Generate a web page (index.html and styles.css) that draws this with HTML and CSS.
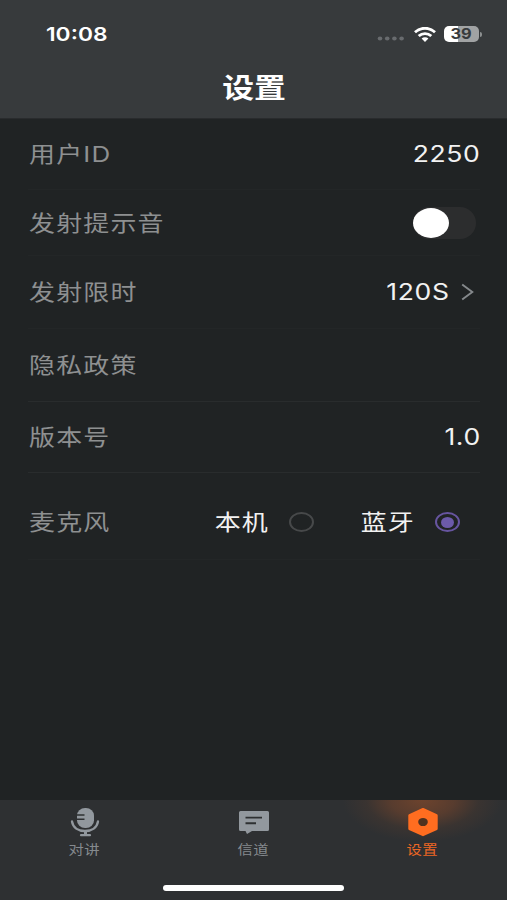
FILE: index.html
```html
<!DOCTYPE html>
<html lang="zh-CN">
<head>
<meta charset="utf-8">
<meta name="viewport" content="width=device-width">
<title>设置</title>
<link rel="stylesheet" href="styles.css">
</head>
<body>
<div class="app">
  <header class="header">
    <div class="status">
      <span class="time wide from-left">10:08</span>
      <div class="status-icons">
        <svg class="dots" width="28" height="5" viewBox="0 0 28 5"><g fill="#686b6e"><ellipse cx="3" cy="2.5" rx="2.3" ry="1.9"/><ellipse cx="10.2" cy="2.5" rx="2.3" ry="1.9"/><ellipse cx="17.4" cy="2.5" rx="2.3" ry="1.9"/><ellipse cx="24.6" cy="2.5" rx="2.3" ry="1.9"/></g></svg>
        <svg class="wifi" width="22" height="15" viewBox="0 0 22 15"><g fill="none" stroke="#fff" stroke-width="2.8"><path d="M1 5.200C6.600-.1 15.400-.1 21 5.200"/><path d="M4.700 9.100C8.300 5.700 13.700 5.700 17.300 9.100"/></g><path d="M7.600 11.600C9.500 9.900 12.500 9.900 14.400 11.600L11 14.900Z" fill="#fff"/></svg>
        <div class="battery"><span class="battery-num">39</span></div>
        <span class="battery-cap"></span>
      </div>
    </div>
    <h1 class="title wide">设置</h1>
  </header>

  <main class="list">
    <section class="row row-id"><span class="label wide from-left">用户ID</span><span class="value wide from-right">2250</span></section>
    <section class="row row-tone"><span class="label wide from-left">发射提示音</span><span class="switch"><span class="knob"></span></span></section>
    <section class="row row-limit"><span class="label wide from-left">发射限时</span><span class="more"><span class="value wide from-right">120S</span><svg width="13" height="18" viewBox="0 0 13 18"><path d="M1.200 1.500L11.300 9L1.200 16.500" fill="none" stroke="#85898c" stroke-width="1.900"/></svg></span></section>
    <section class="row row-privacy"><span class="label wide from-left">隐私政策</span></section>
    <section class="row row-version"><span class="label wide from-left">版本号</span><span class="value wide from-right">1.0</span></section>
    <section class="row row-mic"><span class="label wide from-left">麦克风</span>
      <div class="choices">
        <span class="option wide from-right">本机</span><span class="radio"></span>
        <span class="option second wide from-right">蓝牙</span><span class="radio on"></span>
      </div>
    </section>
  </main>

  <footer class="footer">
    <nav class="tabs">
      <div class="tab">
        <svg width="30" height="30" viewBox="0 0 30 30"><rect x="7" y="1" width="17" height="20" rx="8" ry="7.500" fill="#92989e"/><path d="M6 8H14.500M6 12.300H14.500" stroke="#2e3032" stroke-width="1.400"/><path d="M2 14.500C3 20.500 8 24 15 24S27 20.500 28 14.500" fill="none" stroke="#92989e" stroke-width="2.300" stroke-linecap="round"/><path d="M15.500 24V28" fill="none" stroke="#92989e" stroke-width="3"/><path d="M11 28.200H20" fill="none" stroke="#92989e" stroke-width="2.200" stroke-linecap="round"/></svg>
        <span class="tab-name wide">对讲</span>
      </div>
      <div class="tab">
        <svg width="30" height="30" viewBox="0 0 30 30"><path d="M1.500 4H28.500Q30 4 30 5.500V22.500Q30 24 28.500 24H13L8 27L6.500 24H1.500Q0 24 0 22.500V5.500Q0 4 1.500 4Z" fill="#92989e"/><path d="M6.500 10.600H23M6.500 16.300H17" stroke="#2e3032" stroke-width="1.900"/></svg>
        <span class="tab-name wide">信道</span>
      </div>
      <div class="tab active">
        <svg width="30" height="30" viewBox="0 0 30 30"><path d="M15 2.200L28.500 8.400V21.800L15 28L1.500 21.800V8.400Z" fill="#ff6d20" stroke="#ff6d20" stroke-width="2.400" stroke-linejoin="round"/><ellipse cx="15" cy="15" rx="4.800" ry="4.100" fill="#50321f"/></svg>
        <span class="tab-name wide">设置</span>
      </div>
    </nav>
    <div class="home"></div>
  </footer>
</div>
</body>
</html>
```

FILE: styles.css
```css
* { box-sizing: border-box; }

body {
  margin: 0;
  background: #202324;
  color: #f2f2f2;
  font-family: Inter, "Noto Sans CJK SC", sans-serif;
}

.app {
  width: 507px;
  height: 900px;
  display: flex;
  flex-direction: column;
  overflow: hidden;
}

/* The interface uses wide letterforms throughout. */
.wide { display: inline-block; transform: scaleX(1.18); white-space: nowrap; }
.from-left { transform-origin: left center; }
.from-right { transform-origin: right center; }

.header {
  height: 119px;
  background: #373a3c;
  border-bottom: 1px solid #292b2d;
  display: flex;
  flex-direction: column;
  align-items: center;
}
.status {
  width: 100%;
  height: 68px;
  padding: 0 25px 0 46px;
  display: flex;
  justify-content: space-between;
  align-items: center;
}
.time { font-size: 19.3px; font-weight: 600; line-height: 24px; color: #fff; }
.status-icons { display: flex; align-items: center; }
.dots { margin: 9px 9px 0 0; }
.wifi { margin-right: 8px; }
.battery {
  width: 35px;
  height: 16px;
  border-radius: 5px;
  background: linear-gradient(90deg, #fff 39%, #a1a3a4 39%);
  display: flex;
  align-items: center;
  justify-content: center;
}
.battery-num {
  font-size: 14px;
  line-height: 16px;
  font-weight: 700;
  color: #373a3c;
  transform: scaleX(1.17);
}
.battery-cap { width: 2px; height: 5px; margin-left: 1px; border-radius: 0 2px 2px 0; background: #8c8f90; }
.title { margin: 4px 0 0; font-size: 27px; line-height: 34px; font-weight: 700; color: #fff; }

.list { flex: 1; padding: 0 27px 0 28px; }
.row {
  display: flex;
  align-items: center;
  justify-content: space-between;
  border-bottom: 1px solid #232627;
}
.row-id { height: 71px; }
.row-tone { height: 66px; padding-right: 4px; }
.row-limit { height: 73px; padding-right: 6px; }
.row-privacy { height: 73px; border-color: #292c2d; }
.row-version { height: 71px; border-color: #292c2d; }
.row-mic { height: 87px; padding: 12px 20px 0 0; }

.label, .option { font-size: 22px; line-height: 30px; letter-spacing: 1px; }
.label { color: #8e9091; margin-left: 1px; }
.value { font-size: 22.5px; line-height: 30px; letter-spacing: .5px; margin-right: -.3px; }

.switch { width: 63px; height: 32px; border-radius: 16px; background: #2c2d2e; display: flex; align-items: center; }
.knob { width: 36px; height: 30px; border-radius: 50%; background: #fff; }
.more { display: flex; align-items: center; gap: 12px; }

.choices { display: flex; align-items: center; }
.radio {
  width: 25px;
  height: 20px;
  margin-left: 20px;
  border: 2px solid #47494a;
  border-radius: 50%;
  display: flex;
  align-items: center;
  justify-content: center;
}
.radio.on { border-color: #6755a0; }
.radio.on::after { content: ""; width: 13px; height: 11px; flex: none; border-radius: 50%; background: #6c5aaa; }
.second { margin-left: 55px; }

.footer { height: 100px; background: #2e3032; display: flex; flex-direction: column; align-items: center; justify-content: space-between; }
.tabs { width: 100%; display: grid; grid-template-columns: repeat(3, 1fr); }
.tab { height: 62px; padding-top: 7px; display: flex; flex-direction: column; align-items: center; color: #858a8e; }
.tab-name { font-size: 13px; line-height: 18px; margin-top: 3px; letter-spacing: .3px; }
.active {
  color: #ed6724;
  background: radial-gradient(ellipse 80px 42px at 50% 0, rgba(125, 72, 44, .8), rgba(115, 68, 44, .6) 40%, rgba(80, 58, 46, .35) 70%, rgba(46, 48, 50, 0) 100%);
}
.home { width: 181px; height: 6px; margin-bottom: 9px; border-radius: 3px; background: #fff; }
```
